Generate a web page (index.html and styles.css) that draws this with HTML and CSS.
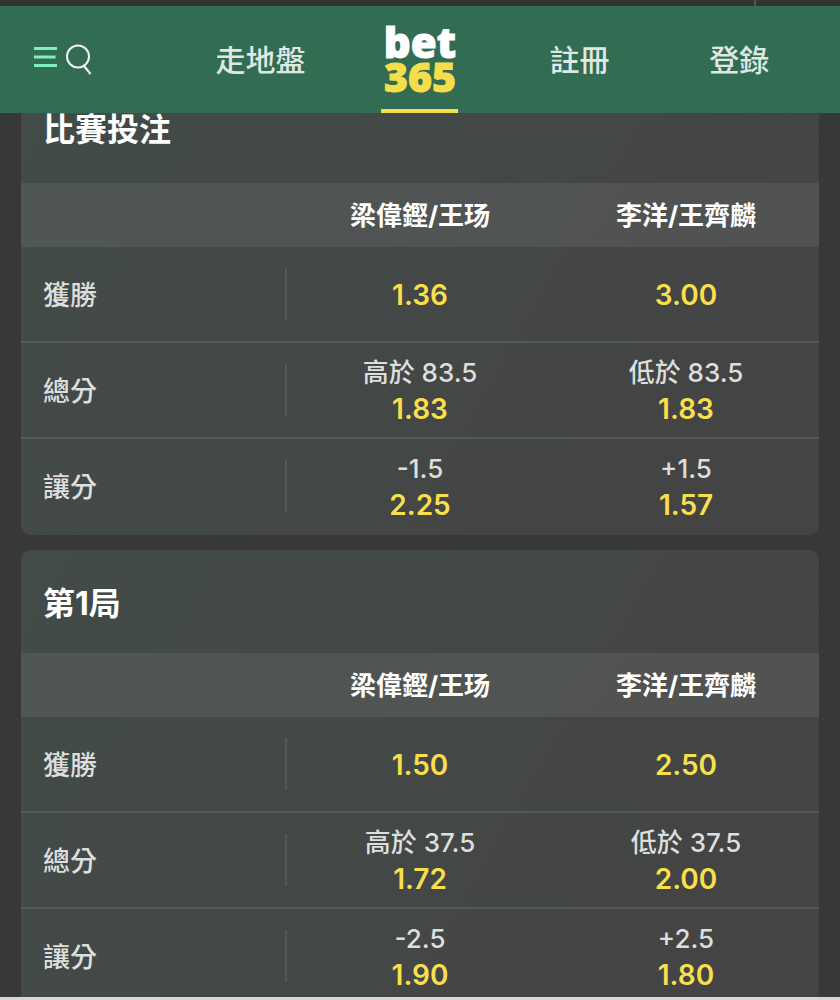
FILE: index.html
```html
<!DOCTYPE html>
<html lang="zh-Hant">
<head>
    <meta charset="UTF-8">
    <meta name="viewport" content="width=device-width, initial-scale=1.0">
    <title>bet365</title>
    <link rel="stylesheet" href="styles.css">
</head>
<body>
    <div class="top-strip"><div class="top-strip-tab"></div></div>

    <header class="navbar">
        <div class="nav-tools">
            <button class="icon-button" type="button" aria-label="選單">
                <svg width="24" height="32" viewBox="0 0 24 32" fill="none" stroke="#7df0bd" stroke-width="3">
                    <path d="M0 7.5H23M0 16H21.5M0 24.5H23"/>
                </svg>
            </button>
            <button class="icon-button" type="button" aria-label="搜尋">
                <svg width="28" height="32" viewBox="0 0 28 32" fill="none" stroke="#eef5f1" stroke-width="2">
                    <circle cx="13" cy="15.5" r="11"/>
                    <path d="M19 25L25.500 33" stroke-width="2.200"/>
                </svg>
            </button>
        </div>
        <a class="nav-link" href="#inplay">走地盤</a>
        <a class="logo" href="#home">
            <span class="logo-bet">bet</span>
            <span class="logo-365">365</span>
        </a>
        <a class="nav-link" href="#join">註冊</a>
        <a class="nav-link" href="#login">登錄</a>
    </header>

    <main class="markets">
        <section class="market market-scrolled">
            <h2 class="market-title">比賽投注</h2>
            <table class="odds-table">
                <thead>
                    <tr>
                        <td></td>
                        <th scope="col">梁偉鏗/王玚</th>
                        <th scope="col">李洋/王齊麟</th>
                    </tr>
                </thead>
                <tbody>
                    <tr>
                        <th scope="row">獲勝</th>
                        <td><button class="bet" type="button"><span class="odds">1.36</span></button></td>
                        <td><button class="bet" type="button"><span class="odds">3.00</span></button></td>
                    </tr>
                    <tr>
                        <th scope="row">總分</th>
                        <td><button class="bet" type="button"><span class="line">高於 83.5</span><span class="odds">1.83</span></button></td>
                        <td><button class="bet" type="button"><span class="line">低於 83.5</span><span class="odds">1.83</span></button></td>
                    </tr>
                    <tr>
                        <th scope="row">讓分</th>
                        <td><button class="bet" type="button"><span class="line">-1.5</span><span class="odds">2.25</span></button></td>
                        <td><button class="bet" type="button"><span class="line">+1.5</span><span class="odds">1.57</span></button></td>
                    </tr>
                </tbody>
            </table>
        </section>

        <section class="market">
            <h2 class="market-title">第1局</h2>
            <table class="odds-table">
                <thead>
                    <tr>
                        <td></td>
                        <th scope="col">梁偉鏗/王玚</th>
                        <th scope="col">李洋/王齊麟</th>
                    </tr>
                </thead>
                <tbody>
                    <tr>
                        <th scope="row">獲勝</th>
                        <td><button class="bet" type="button"><span class="odds">1.50</span></button></td>
                        <td><button class="bet" type="button"><span class="odds">2.50</span></button></td>
                    </tr>
                    <tr>
                        <th scope="row">總分</th>
                        <td><button class="bet" type="button"><span class="line">高於 37.5</span><span class="odds">1.72</span></button></td>
                        <td><button class="bet" type="button"><span class="line">低於 37.5</span><span class="odds">2.00</span></button></td>
                    </tr>
                    <tr>
                        <th scope="row">讓分</th>
                        <td><button class="bet" type="button"><span class="line">-2.5</span><span class="odds">1.90</span></button></td>
                        <td><button class="bet" type="button"><span class="line">+2.5</span><span class="odds">1.80</span></button></td>
                    </tr>
                </tbody>
            </table>
        </section>
    </main>

    <div class="bottom-edge"></div>
</body>
</html>
```
FILE: styles.css
```css
* {
    box-sizing: border-box;
}

body {
    margin: 0;
    height: 100vh;
    display: flex;
    flex-direction: column;
    background: #383838;
    color: #dcdfdd;
    font-family: Inter, "Noto Sans CJK TC", sans-serif;
}

button {
    padding: 0;
    border: 0;
    background: none;
    color: inherit;
    font: inherit;
    cursor: pointer;
}

.top-strip {
    flex: none;
    height: 6px;
    background: #333432;
}
.top-strip-tab {
    width: 90%;
    height: 100%;
    border-right: 2px solid #555653;
}

/* header */
.navbar {
    flex: none;
    display: grid;
    grid-template-columns: repeat(5, 1fr);
    height: 107px;
    padding: 0 21px;
    background: #326d53;
    position: relative;
    z-index: 1;
}
.nav-tools {
    display: flex;
    align-items: center;
    gap: 7px;
    padding: 0 0 6px 13px;
}
.icon-button,
.icon-button svg {
    display: block;
    overflow: visible;
}
.nav-link {
    display: flex;
    align-items: center;
    justify-content: center;
    padding-bottom: 4px;
    color: #dfe8e3;
    font-size: 30px;
    font-weight: 500;
    text-decoration: none;
}
.logo {
    justify-self: center;
    display: flex;
    flex-direction: column;
    align-items: center;
    width: 77px;
    padding-top: 19px;
    border-bottom: 4px solid #f6dd4b;
    font-family: "Open Sans", sans-serif;
    font-size: 42px;
    font-weight: 800;
    line-height: 34px;
    text-decoration: none;
    -webkit-text-stroke: 1px currentColor;
}
.logo-bet {
    color: #fff;
}
.logo-365 {
    color: #f6dd4b;
    font-size: 41px;
}

/* market cards */
.markets {
    flex: 1;
    min-height: 0;
    padding: 0 21px;
    overflow-y: auto;
    scrollbar-width: none;
}
.market {
    margin-bottom: 15px;
    border-radius: 10px;
    overflow: hidden;
    background: linear-gradient(120deg, #424b48, #434846 50%, #444 80%);
}
.market-scrolled {
    margin-top: -33px;
}
.market-title {
    margin: 0;
    padding: 30px 22px 25px;
    color: #fff;
    font-size: 32px;
    font-weight: 700;
    line-height: 48px;
}
.market-scrolled .market-title {
    padding-top: 26px;
    padding-bottom: 29px;
}

.odds-table {
    width: 100%;
    border-collapse: separate;
    border-spacing: 0;
    table-layout: fixed;
}
.odds-table th,
.odds-table td {
    padding: 0;
    text-align: center;
}
.odds-table thead th,
.odds-table thead td {
    height: 64px;
    padding-bottom: 4px;
    background: rgba(255, 255, 255, 0.07);
    color: #fff;
    font-size: 26px;
    font-weight: 700;
}
.odds-table tbody th,
.odds-table tbody td {
    height: 96px;
    border-bottom: 2px solid #545856;
}
.odds-table tbody tr:last-child th,
.odds-table tbody tr:last-child td {
    border-bottom-color: transparent;
}
.odds-table tbody th {
    position: relative;
    padding: 0 0 2px 22px;
    font-size: 27px;
    font-weight: 500;
    text-align: left;
}
.odds-table tbody th::after {
    content: "";
    position: absolute;
    top: 21px;
    right: 0;
    width: 2px;
    height: 52px;
    background: #545856;
}

.bet {
    display: flex;
    flex-direction: column;
    align-items: center;
    justify-content: center;
    width: 100%;
    height: 94px;
    padding-top: 2px;
    line-height: 36px;
}
.line {
    font-size: 26px;
    font-weight: 500;
}
.odds {
    color: #f8df4c;
    font-size: 28px;
    font-weight: 600;
}

.bottom-edge {
    flex: none;
    height: 3px;
    background: #d8d6d6;
}
```
